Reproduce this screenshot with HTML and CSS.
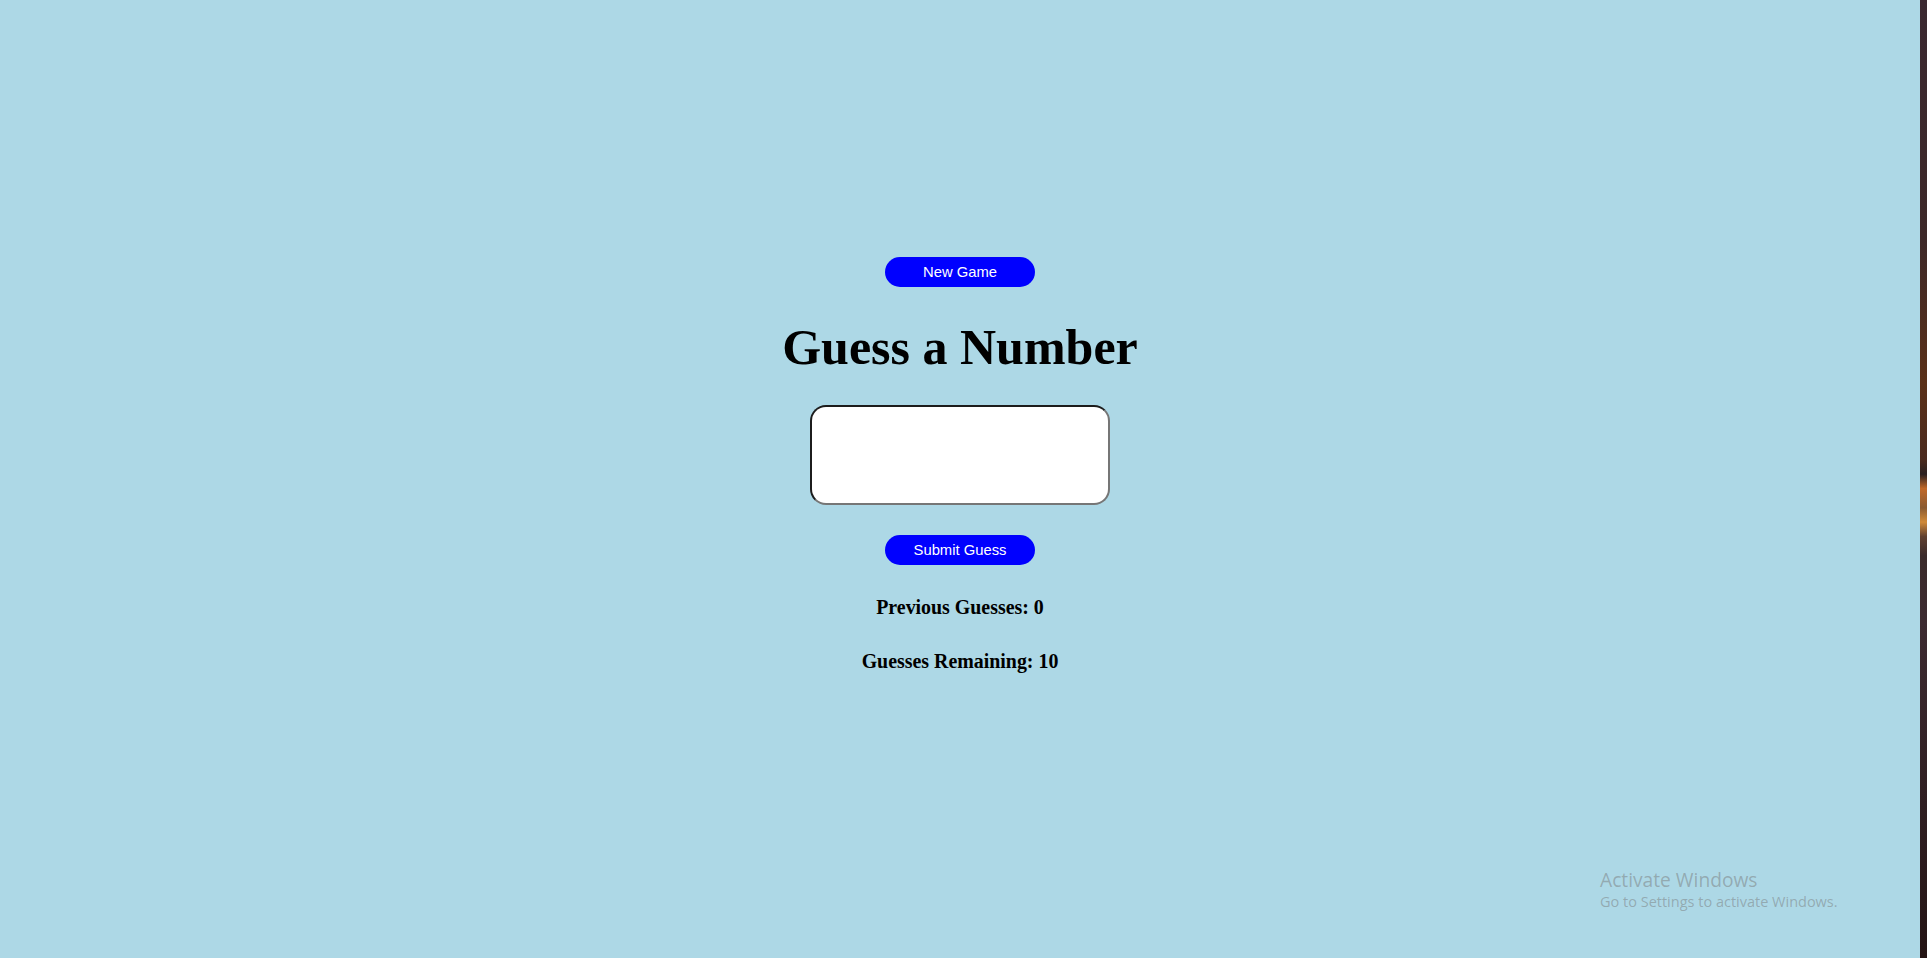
FILE: index.html
```html
<!DOCTYPE html>
<html lang="en">
<head>
<meta charset="utf-8">
<title>Guess a Number</title>
<link rel="stylesheet" href="styles.css">
</head>
<body>
  <div class="screen">
    <main class="page">
      <button class="btn" type="button">New Game</button>
      <h1 class="title">Guess a Number</h1>
      <input class="guess-input" type="text" aria-label="Your guess">
      <button class="btn" type="button">Submit Guess</button>
      <h3 class="stat">Previous Guesses: 0</h3>
      <h3 class="stat stat-remaining">Guesses Remaining: 10</h3>
      <div class="watermark">
        <div class="wm-title">Activate Windows</div>
        <div class="wm-sub">Go to Settings to activate Windows.</div>
      </div>
    </main>
    <div class="desktop-strip"></div>
  </div>
</body>
</html>
```

FILE: styles.css
```css
html, body {
  margin: 0;
  padding: 0;
  height: 100%;
}

body {
  background: #add8e6;
  font-family: "Liberation Serif", "Times New Roman", serif;
  overflow: hidden;
}

.screen {
  display: flex;
  height: 958px;
  width: 1927px;
}

.page {
  position: relative;
  width: 1920px;
  flex: 0 0 1920px;
  background: #add8e6;
  display: flex;
  flex-direction: column;
  align-items: center;
  padding-top: 257px;
  gap: 30px;
  box-sizing: border-box;
}

.btn {
  width: 150px;
  height: 30px;
  border: none;
  border-radius: 15px;
  background: #0000ff;
  color: #ffffff;
  font-family: "Liberation Sans", Arial, sans-serif;
  font-size: 14.8px;
  padding: 0;
  margin: 0;
  line-height: 30px;
}

.title {
  margin: 2px 0 0 0;
  font-size: 50px;
  line-height: 56px;
  font-weight: bold;
  color: #000;
}

.guess-input {
  width: 300px;
  height: 100px;
  box-sizing: border-box;
  margin: 0;
  background: #ffffff;
  border-style: solid;
  border-width: 2px;
  border-color: #1c1c1c #767676 #767676 #1c1c1c;
  border-radius: 16px;
  padding: 0 8px;
}

.stat {
  margin: 1px 0 0 0;
  font-size: 19.9px;
  line-height: 22px;
  font-weight: bold;
  color: #000;
}

.stat-remaining {
  margin-top: 2px;
}

.desktop-strip {
  flex: 0 0 7px;
  background: linear-gradient(to bottom,
    #3a2830 0%,
    #3d2828 25%,
    #5a3018 40%,
    #4a2a1e 48%,
    #2a2020 49.5%,
    #c06828 51%,
    #8a5a30 53%,
    #d08a38 54.5%,
    #604030 56%,
    #3a2a2a 58%,
    #3c2a30 65%,
    #241414 100%);
}

.watermark {
  position: absolute;
  left: 1600px;
  top: 868px;
  color: rgba(118, 118, 118, 0.48);
  font-family: "Open Sans", "Noto Sans", sans-serif;
  line-height: 1.2;
}

.wm-title {
  font-size: 19.2px;
}

.wm-sub {
  font-size: 14.5px;
  margin-top: 2px;
}
```
